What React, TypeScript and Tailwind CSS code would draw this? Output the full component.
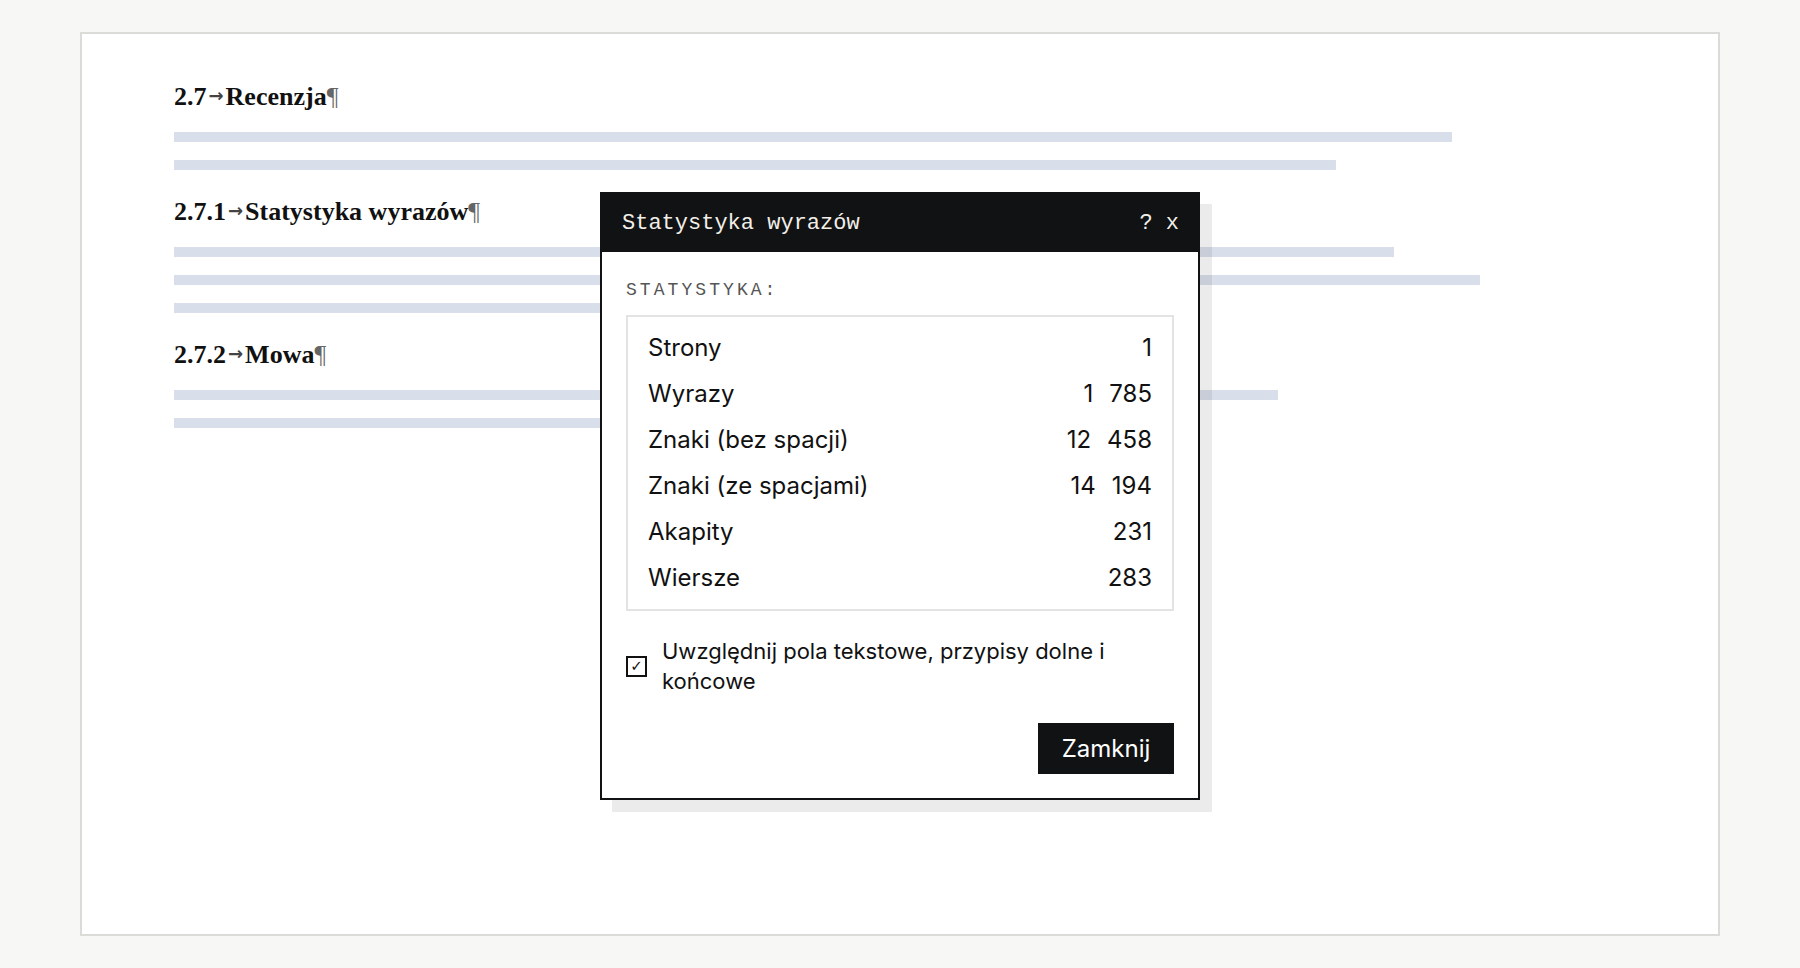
import React from "react";

const serif = "font-['Liberation_Serif','Times_New_Roman',serif]";
const mono = "font-['Liberation_Mono','DejaVu_Sans_Mono',monospace]";
const sans = "font-['Inter','Noto_Sans',sans-serif]";

type Section = { num: string; title: string; bars: number[] };

const sections: Section[] = [
  { num: "2.7", title: "Recenzja", bars: [1278, 1162] },
  { num: "2.7.1", title: "Statystyka wyrazów", bars: [1220, 1306, 830] },
  { num: "2.7.2", title: "Mowa", bars: [1104, 760] },
];

const stats: [string, string[]][] = [
  ["Strony", ["1"]],
  ["Wyrazy", ["1", "785"]],
  ["Znaki (bez spacji)", ["12", "458"]],
  ["Znaki (ze spacjami)", ["14", "194"]],
  ["Akapity", ["231"]],
  ["Wiersze", ["283"]],
];

function Heading({ num, title }: { num: string; title: string }) {
  return (
    <h2 className={`${serif} h-[30px] whitespace-nowrap text-[26px] font-bold leading-[30px] text-[#111]`}>
      {num}
      <span className="mx-[2px] font-['DejaVu_Sans',sans-serif] text-[18px] font-bold leading-none text-[#444] align-[3px]">
        →
      </span>
      {title}
      <span className="font-normal leading-none text-[#666]">¶</span>
    </h2>
  );
}

function WordCountDialog() {
  return (
    <div className="absolute left-[518px] top-[158px] w-[600px] border-2 border-[#111214] bg-white shadow-[12px_12px_0_rgba(0,0,0,0.08)]">
      <div className={`${mono} flex h-[58px] items-center justify-between bg-[#111214] pl-5 pr-[19px] text-[22px] text-[#f2efe8]`}>
        <span>Statystyka wyrazów</span>
        <span>? x</span>
      </div>

      <div className="flex flex-col p-6">
        <div className={`${mono} mb-[13px] mt-[2px] text-[18px] leading-[24px] tracking-[0.17em] text-[#555]`}>
          STATYSTYKA:
        </div>

        <div className={`${sans} border-2 border-[#e3e3e3] px-5 py-2 text-[24px] text-[#111]`}>
          {stats.map(([label, parts]) => (
            <div key={label} className="flex h-[46px] items-center justify-between">
              <span>{label}</span>
              <span className="flex gap-[16px]">
                {parts.map((p) => (
                  <span key={p}>{p}</span>
                ))}
              </span>
            </div>
          ))}
        </div>

        <label className={`${sans} mt-[25px] flex items-center gap-[15px] text-[22px] leading-[30px] text-[#111]`}>
          <span className="flex h-[21px] w-[21px] shrink-0 items-center justify-center border-2 border-[#111] font-['DejaVu_Sans',sans-serif] text-[15px] font-bold leading-none text-[#111]">
            ✓
          </span>
          <span>Uwzględnij pola tekstowe, przypisy dolne i końcowe</span>
        </label>

        <button
          className={`${sans} mt-[27px] h-[51px] w-[136px] self-end bg-[#111214] text-[24px] text-white`}
        >
          Zamknij
        </button>
      </div>
    </div>
  );
}

export default function App() {
  return (
    <div className="min-h-[968px] bg-[#f7f7f5] px-20 py-8">
      <div className="relative h-[904px] border-2 border-[#dbdbd7] bg-white pl-[92px] pt-[48px]">
        <div className="flex flex-col gap-[27px]">
          {sections.map((s) => (
            <section key={s.num} className="flex flex-col">
              <Heading num={s.num} title={s.title} />
              <div className="mt-5 flex flex-col gap-[18px]">
                {s.bars.map((w, i) => (
                  <div key={i} className="h-[10px] bg-[#d9dfea]" style={{ width: w }} />
                ))}
              </div>
            </section>
          ))}
        </div>

        <WordCountDialog />
      </div>
    </div>
  );
}
